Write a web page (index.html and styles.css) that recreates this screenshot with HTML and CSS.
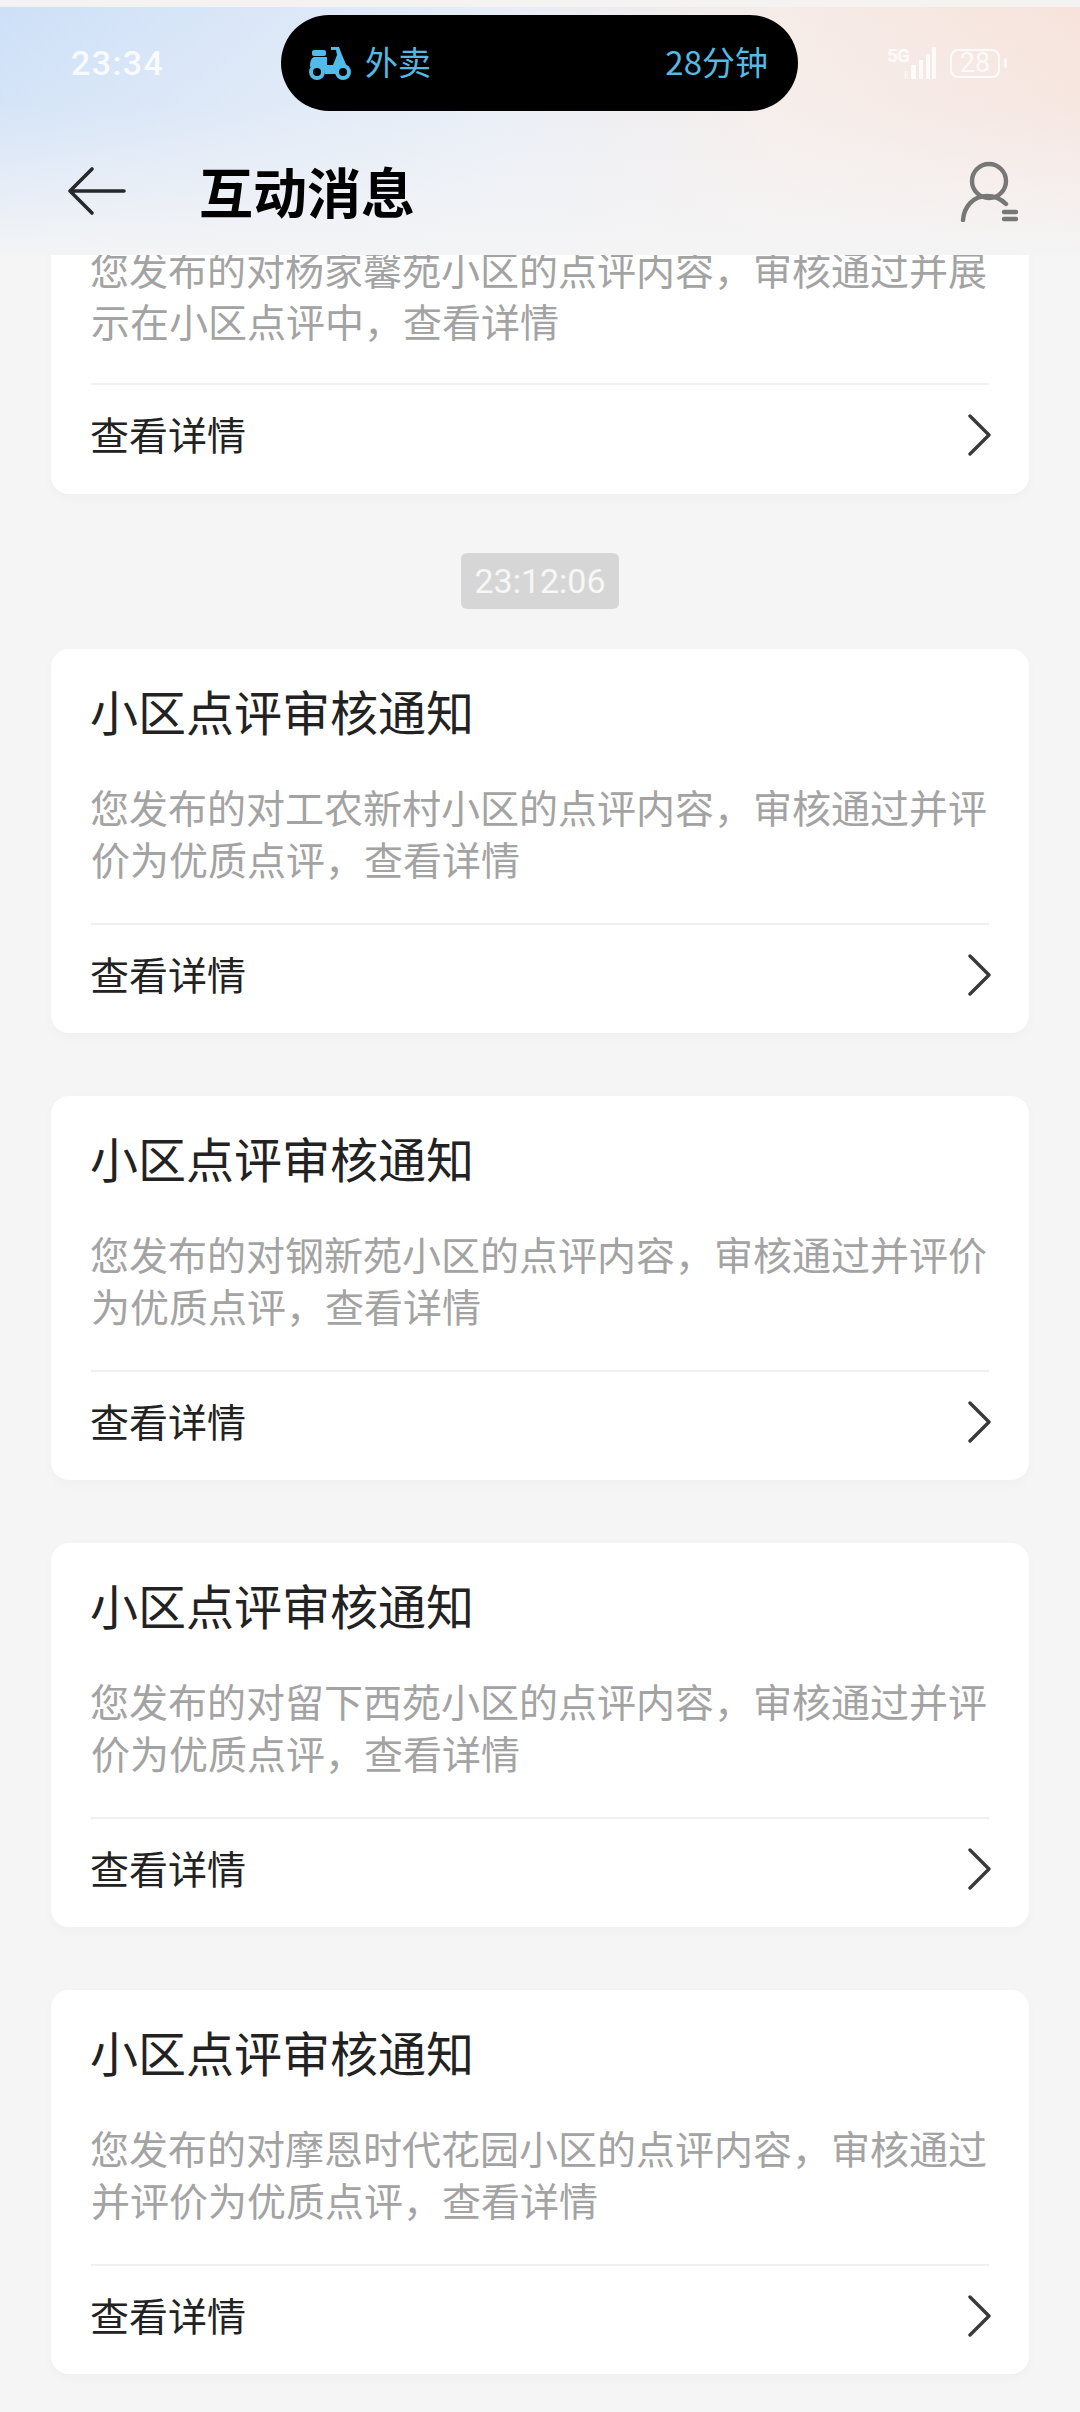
FILE: index.html
```html
<!DOCTYPE html>
<html lang="zh-CN">
<head>
  <meta charset="UTF-8">
  <title>互动消息</title>
  <link rel="stylesheet" href="styles.css">
</head>
<body>
  <header class="top">
    <div class="status">
      <span class="clock">23:34</span>
      <div class="island">
        <div class="island-left">
          <svg class="scooter" width="44" height="36" viewBox="0 0 44 36">
            <rect x="4" y="5" width="14" height="6" rx="2" fill="#4fbce9"/>
            <path d="M2 22c0-5 1-9 4-10h13v8h6l4-10-1-5h-5V2h8l3 8 6 14c-5-1-9 1-10 5H17c0-5-3-8-7-8-3 0-6 0-8 1z" fill="#4fbce9"/>
            <circle cx="9" cy="27" r="6" fill="#000" stroke="#4fbce9" stroke-width="4"/>
            <circle cx="35" cy="27" r="6" fill="#000" stroke="#4fbce9" stroke-width="4"/>
          </svg>
          <span>外卖</span>
        </div>
        <span>28分钟</span>
      </div>
      <div class="sys">
        <span class="net">5G</span>
        <svg class="bars" width="32" height="32" viewBox="0 0 32 32">
          <rect x="0" y="24" width="4" height="8" opacity=".45"/>
          <rect x="7" y="18" width="5" height="14"/>
          <rect x="15" y="13" width="4" height="19"/>
          <rect x="22" y="7" width="4" height="25"/>
          <rect x="28" y="0" width="4" height="32"/>
        </svg>
        <span class="battery">28</span>
        <span class="battery-tip"></span>
      </div>
    </div>
    <nav class="nav">
      <svg class="back" width="60" height="50" viewBox="0 0 60 50">
        <path d="M57 25H3M25 3 3 25l22 22" fill="none" stroke="#26282b" stroke-width="3.6" stroke-linecap="round" stroke-linejoin="round"/>
      </svg>
      <h1>互动消息</h1>
      <svg class="user" width="60" height="64" viewBox="0 0 60 64">
        <circle cx="29" cy="23" r="17" fill="none" stroke="#777" stroke-width="4.4"/>
        <path d="M3 62c1-13 10-24 24-24 7 0 13 2 19 8" fill="none" stroke="#777" stroke-width="4.4" stroke-linecap="round"/>
        <path d="M44 54h12M44 61h12" fill="none" stroke="#777" stroke-width="4.4" stroke-linecap="round"/>
      </svg>
    </nav>
  </header>

  <main class="list">
    <section class="card card-cut">
      <p class="desc">您发布的对杨家馨苑小区的点评内容，审核通过并展示在小区点评中，查看详情</p>
      <div class="more">
        <span>查看详情</span>
        <svg class="chev" width="24" height="42" viewBox="0 0 24 42"><path d="M3 2l19 19L3 40" fill="none" stroke="#3a3a3a" stroke-width="3.4" stroke-linecap="round" stroke-linejoin="round"/></svg>
      </div>
    </section>

    <div class="stamp">23:12:06</div>

    <section class="card">
      <h2>小区点评审核通知</h2>
      <p class="desc">您发布的对工农新村小区的点评内容，审核通过并评价为优质点评，查看详情</p>
      <div class="more">
        <span>查看详情</span>
        <svg class="chev" width="24" height="42" viewBox="0 0 24 42"><path d="M3 2l19 19L3 40" fill="none" stroke="#3a3a3a" stroke-width="3.4" stroke-linecap="round" stroke-linejoin="round"/></svg>
      </div>
    </section>

    <section class="card">
      <h2>小区点评审核通知</h2>
      <p class="desc">您发布的对钢新苑小区的点评内容，审核通过并评价为优质点评，查看详情</p>
      <div class="more">
        <span>查看详情</span>
        <svg class="chev" width="24" height="42" viewBox="0 0 24 42"><path d="M3 2l19 19L3 40" fill="none" stroke="#3a3a3a" stroke-width="3.4" stroke-linecap="round" stroke-linejoin="round"/></svg>
      </div>
    </section>

    <section class="card">
      <h2>小区点评审核通知</h2>
      <p class="desc">您发布的对留下西苑小区的点评内容，审核通过并评价为优质点评，查看详情</p>
      <div class="more">
        <span>查看详情</span>
        <svg class="chev" width="24" height="42" viewBox="0 0 24 42"><path d="M3 2l19 19L3 40" fill="none" stroke="#3a3a3a" stroke-width="3.4" stroke-linecap="round" stroke-linejoin="round"/></svg>
      </div>
    </section>

    <section class="card">
      <h2>小区点评审核通知</h2>
      <p class="desc">您发布的对摩恩时代花园小区的点评内容，审核通过并评价为优质点评，查看详情</p>
      <div class="more">
        <span>查看详情</span>
        <svg class="chev" width="24" height="42" viewBox="0 0 24 42"><path d="M3 2l19 19L3 40" fill="none" stroke="#3a3a3a" stroke-width="3.4" stroke-linecap="round" stroke-linejoin="round"/></svg>
      </div>
    </section>
  </main>
</body>
</html>
```

FILE: styles.css
```css
* {
  box-sizing: border-box;
}
html, body {
  margin: 0;
  height: 2412px;
  overflow: hidden;
}
body {
  background: #f5f5f5;
  font-family: "Noto Sans CJK SC", "Noto Sans", sans-serif;
}
.top {
  height: 255px;
  border-top: 7px solid #f5f3f1;
  background:
    linear-gradient(to bottom, rgba(245, 245, 246, 0) 0%, rgba(245, 245, 246, .2) 40%, rgba(245, 245, 246, .65) 75%, #f4f4f5 100%),
    linear-gradient(to right, #cde0f8 0%, #e6edf8 45%, #f6ece8 72%, #f7e3dc 100%);
}
.status {
  display: grid;
  grid-template-columns: 281px 517px 1fr;
  align-items: center;
  padding-top: 8px;
  height: 104px;
}
.clock {
  padding-left: 71px;
  font-family: Roboto, sans-serif;
  font-size: 34px;
  font-weight: 500;
  letter-spacing: 1.4px;
  color: rgba(255, 255, 255, .85);
}
.island {
  display: flex;
  justify-content: space-between;
  align-items: center;
  height: 96px;
  padding: 0 30px 4px 27px;
  border-radius: 48px;
  background: #000;
  color: #54b9e4;
  font-size: 33px;
}
.island-left {
  display: flex;
  align-items: center;
  gap: 13px;
}
.scooter {
  margin-top: 4px;
}
.sys {
  display: flex;
  align-items: center;
  padding-left: 89px;
  color: rgba(255, 255, 255, .8);
}
.net {
  align-self: flex-start;
  width: 17px;
  font-family: Roboto, sans-serif;
  font-size: 19px;
  font-weight: 700;
  line-height: 18px;
  letter-spacing: -1px;
  white-space: nowrap;
}
.bars {
  fill: rgba(255, 255, 255, .8);
}
.battery {
  width: 50px;
  height: 29px;
  margin-left: 14px;
  border: 2.5px solid rgba(255, 255, 255, .8);
  border-radius: 8px;
  font-family: Roboto, sans-serif;
  font-size: 27px;
  line-height: 24px;
  text-align: center;
}
.battery-tip {
  width: 3px;
  height: 10px;
  margin-left: 4px;
  border-radius: 2px;
  background: rgba(255, 255, 255, .7);
}
.nav {
  display: flex;
  align-items: center;
  height: 132px;
  padding: 26px 60px 0 67px;
}
.back {
  margin-top: 2px;
}
.nav h1 {
  flex: 1;
  margin: 0 0 0 72px;
  font-size: 54px;
  font-weight: 700;
  color: #000;
}
.list {
  height: 2157px;
  overflow: hidden;
  padding: 0 51px;
}
.card {
  height: 384px;
  margin-bottom: 63px;
  padding: 31px 40px 0;
  border-radius: 18px;
  background: #fff;
  box-shadow: 0 4px 12px rgba(0, 0, 0, .025);
}
.card h2 {
  margin: 0 0 0 -1px;
  font-size: 48px;
  font-weight: 400;
  line-height: 60px;
  color: #222;
}
.desc {
  height: 145px;
  margin: 40px 0 0;
  padding-bottom: 36px;
  border-bottom: 2px solid #f0f0f0;
  font-size: 39px;
  line-height: 52px;
  text-indent: -1px;
  color: #a3a3a3;
}
.card-cut {
  height: 252px;
  margin-top: -13px;
  margin-bottom: 59px;
  padding-top: 0;
  border-radius: 0 0 18px 18px;
}
.card-cut .desc {
  height: 143px;
  margin-top: 0;
}
.more {
  display: flex;
  justify-content: space-between;
  align-items: center;
  height: 96px;
  margin-left: -1px;
  font-size: 39px;
  color: #222;
}
.chev {
  margin: 4px -2px 0 0;
}
.stamp {
  width: 158px;
  height: 56px;
  margin: 0 auto 40px;
  border-radius: 6px;
  background: #d6d6d6;
  font-family: Roboto, sans-serif;
  font-size: 34px;
  line-height: 56px;
  text-align: center;
  color: #f7f7f7;
}
```
